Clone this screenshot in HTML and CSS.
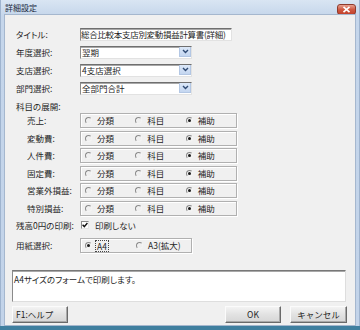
FILE: index.html
```html
<!DOCTYPE html>
<html lang="ja">
<head>
  <meta charset="UTF-8" />
  <title>詳細設定</title>
  <link rel="stylesheet" href="styles.css">
</head>
<body>
  <div class="window">
    <div class="titlebar">
      <span class="title">詳細設定</span>
      <span class="close-btn">
        <svg width="9" height="7" viewBox="0 0 9 7"><path d="M1.5 0.8L7.5 6.2M7.5 0.8L1.5 6.2" stroke="#fff" stroke-width="1.6" fill="none"/></svg>
      </span>
    </div>

    <div class="client">
      <div class="form">
        <div class="row">
          <span class="lbl">タイトル:</span>
          <div class="textbox title-box">総合比較本支店別変動損益計算書(詳細)</div>
        </div>
        <div class="row">
          <span class="lbl">年度選択:</span>
          <div class="combo"><span class="combo-text">翌期</span><span class="combo-btn"><svg width="7" height="5" viewBox="0 0 7 5"><path d="M1 1l2.5 2.5L6 1" stroke="#2f4a73" stroke-width="1.4" fill="none"/></svg></span></div>
        </div>
        <div class="row">
          <span class="lbl">支店選択:</span>
          <div class="combo"><span class="combo-text">4支店選択</span><span class="combo-btn"><svg width="7" height="5" viewBox="0 0 7 5"><path d="M1 1l2.5 2.5L6 1" stroke="#2f4a73" stroke-width="1.4" fill="none"/></svg></span></div>
        </div>
        <div class="row">
          <span class="lbl">部門選択:</span>
          <div class="combo"><span class="combo-text">全部門合計</span><span class="combo-btn"><svg width="7" height="5" viewBox="0 0 7 5"><path d="M1 1l2.5 2.5L6 1" stroke="#2f4a73" stroke-width="1.4" fill="none"/></svg></span></div>
        </div>
        <div class="row heading">
          <span class="lbl">科目の展開:</span>
        </div>

        <div class="radio-row">
          <span class="lbl sub">売上:</span>
          <div class="group">
            <span class="radio"><i class="dot"></i>分類</span>
            <span class="radio"><i class="dot"></i>科目</span>
            <span class="radio"><i class="dot on"></i>補助</span>
          </div>
        </div>
        <div class="radio-row">
          <span class="lbl sub">変動費:</span>
          <div class="group">
            <span class="radio"><i class="dot"></i>分類</span>
            <span class="radio"><i class="dot"></i>科目</span>
            <span class="radio"><i class="dot on"></i>補助</span>
          </div>
        </div>
        <div class="radio-row">
          <span class="lbl sub">人件費:</span>
          <div class="group">
            <span class="radio"><i class="dot"></i>分類</span>
            <span class="radio"><i class="dot"></i>科目</span>
            <span class="radio"><i class="dot on"></i>補助</span>
          </div>
        </div>
        <div class="radio-row">
          <span class="lbl sub">固定費:</span>
          <div class="group">
            <span class="radio"><i class="dot"></i>分類</span>
            <span class="radio"><i class="dot"></i>科目</span>
            <span class="radio"><i class="dot on"></i>補助</span>
          </div>
        </div>
        <div class="radio-row">
          <span class="lbl sub">営業外損益:</span>
          <div class="group">
            <span class="radio"><i class="dot"></i>分類</span>
            <span class="radio"><i class="dot"></i>科目</span>
            <span class="radio"><i class="dot on"></i>補助</span>
          </div>
        </div>
        <div class="radio-row">
          <span class="lbl sub">特別損益:</span>
          <div class="group">
            <span class="radio"><i class="dot"></i>分類</span>
            <span class="radio"><i class="dot"></i>科目</span>
            <span class="radio"><i class="dot on"></i>補助</span>
          </div>
        </div>

        <div class="row check-row">
          <span class="lbl">残高0円の印刷:</span>
          <span class="check"><i class="box"><svg width="6" height="6" viewBox="0 0 6 6"><path d="M0.6 2.8l1.7 1.8L5.4 1" stroke="#111" stroke-width="1.4" fill="none"/></svg></i>印刷しない</span>
        </div>

        <div class="radio-row paper">
          <span class="lbl">用紙選択:</span>
          <div class="group narrow">
            <span class="radio"><i class="dot on"></i><span class="focus">A4</span></span>
            <span class="radio"><i class="dot"></i>A3(拡大)</span>
          </div>
        </div>
      </div>

      <div class="message">A4サイズのフォームで印刷します。</div>

      <div class="buttons">
        <button class="btn help">F1:ヘルプ</button>
        <span class="spacer"></span>
        <button class="btn">OK</button>
        <button class="btn">キャンセル</button>
      </div>
    </div>
  </div>
</body>
</html>
```

FILE: styles.css
```css
body {
  margin: 0;
  font-family: "Noto Sans CJK JP", sans-serif;
  font-size: 8.5px;
  color: #1e1e1e;
  font-feature-settings: "palt";
}
.window {
  width: 360px;
  height: 330px;
  box-sizing: border-box;
  padding: 0 5px 1px 5px;
  display: flex;
  flex-direction: column;
  background: linear-gradient(#d9e5f3, #c5d6eb 16px, #c2d3e9);
  border-bottom: 4px solid #3f7f9f;
  box-shadow: inset 1px 0 0 #9fb4cf, inset -1px 0 0 #9fb4cf;
}
.titlebar {
  height: 15px;
  display: flex;
  align-items: center;
  flex-shrink: 0;
}
.title {
  font-size: 8px;
  color: #1b2940;
  line-height: 15px;
}
.close-btn {
  margin-left: auto;
  margin-right: -1px;
  margin-top: 3px;
  width: 19px;
  height: 11px;
  box-sizing: border-box;
  border: 1px solid #8e3a2c;
  border-radius: 3px;
  background: linear-gradient(#e7a191, #d05a43 50%, #c2412b);
  display: flex;
  align-items: center;
  justify-content: center;
}
.client {
  flex: 1;
  background: #f0f0f0;
  box-shadow: 0 0 0 1px #a5b7ce;
  display: flex;
  flex-direction: column;
}
.form {
  padding: 13px 0 0 11px;
}
.row {
  display: flex;
  align-items: center;
  height: 13px;
  line-height: 13px;
  margin-bottom: 5px;
}
.row.heading {
  margin-bottom: 0;
}
.lbl {
  width: 64px;
  flex-shrink: 0;
  white-space: nowrap;
}
.lbl.sub {
  padding-left: 11px;
  width: 53px;
}
.textbox, .combo {
  height: 13px;
  box-sizing: border-box;
  background: #fff;
  border: 1px solid;
  border-color: #6f6f6f #e2e2e2 #e2e2e2 #8a8a8a;
  box-shadow: inset 0 1px 0 #a8a8a8;
  line-height: 11px;
  padding-left: 1px;
  white-space: nowrap;
  overflow: hidden;
}
.title-box {
  width: 152px;
  letter-spacing: -0.3px;
  padding-left: 0;
}
.combo {
  width: 112px;
  display: flex;
  padding-right: 0;
}
.combo-text {
  flex: 1;
}
.combo-btn {
  width: 12px;
  height: 11px;
  margin-top: -1px;
  box-sizing: border-box;
  background: linear-gradient(#dce8f8, #c4d6f0);
  border: 1px solid #b3c7e4;
  display: flex;
  align-items: center;
  justify-content: center;
}
.radio-row {
  display: flex;
  align-items: center;
  height: 15px;
  line-height: 13px;
  margin-bottom: 2.5px;
}
.group {
  width: 157px;
  height: 15px;
  box-sizing: border-box;
  border: 1px solid #b0b0b0;
  box-shadow: inset 1px 1px 0 #fff, 1px 1px 0 #fff;
  display: flex;
  align-items: center;
  padding-left: 4px;
}
.group.narrow {
  width: 112px;
}
.radio {
  width: 51px;
  display: flex;
  align-items: center;
  white-space: nowrap;
}
.dot {
  width: 5px;
  height: 5px;
  border: 1px solid;
  border-color: #8a8a8a #f4f4f4 #f4f4f4 #8a8a8a;
  border-radius: 50%;
  margin-right: 5px;
  position: relative;
}
.dot.on::after {
  content: "";
  position: absolute;
  left: 1px;
  top: 1px;
  width: 3px;
  height: 3px;
  border-radius: 50%;
  background: #1a1a1a;
}
.focus {
  display: inline-block;
  line-height: 10px;
  height: 10px;
  outline: 1px dotted #444;
  padding: 0 1px;
  margin-left: -1px;
}
.check-row {
  height: 14px;
  margin-top: 2px;
  margin-bottom: 6px;
}
.check {
  display: flex;
  align-items: center;
  margin-left: 1px;
}
.box {
  width: 8px;
  height: 8px;
  box-sizing: border-box;
  background: #fff;
  border: 1px solid;
  border-color: #8a8a8a #e6e6e6 #e6e6e6 #8a8a8a;
  display: flex;
  align-items: center;
  justify-content: center;
  margin-right: 6px;
}
.message {
  margin: 14px 9px 0 7px;
  height: 32px;
  box-sizing: border-box;
  background: #fff;
  border: 1px solid;
  border-color: #777 #dedede #dedede #8a8a8a;
  box-shadow: inset 0 1px 0 #a8a8a8;
  padding: 2px 1px;
  line-height: 12px;
}
.buttons {
  display: flex;
  margin: 4px 8px 0 7px;
  gap: 9px;
}
.spacer {
  flex: 1;
}
.btn {
  height: 17px;
  width: 56px;
  padding: 0;
  font-family: inherit;
  font-size: 8.5px;
  color: #1e1e1e;
  border: 1px solid;
  border-color: #fbfbfb #6a6a6a #6a6a6a #fbfbfb;
  background: linear-gradient(#f3f3f3, #e2e2e2 50%, #d6d6d6);
  box-shadow: inset -1px -1px 0 #a9a9a9;
  line-height: 15px;
}
.btn.help {
  text-align: left;
  padding-left: 3px;
}
.btn:last-child {
  width: 57px;
}
```
